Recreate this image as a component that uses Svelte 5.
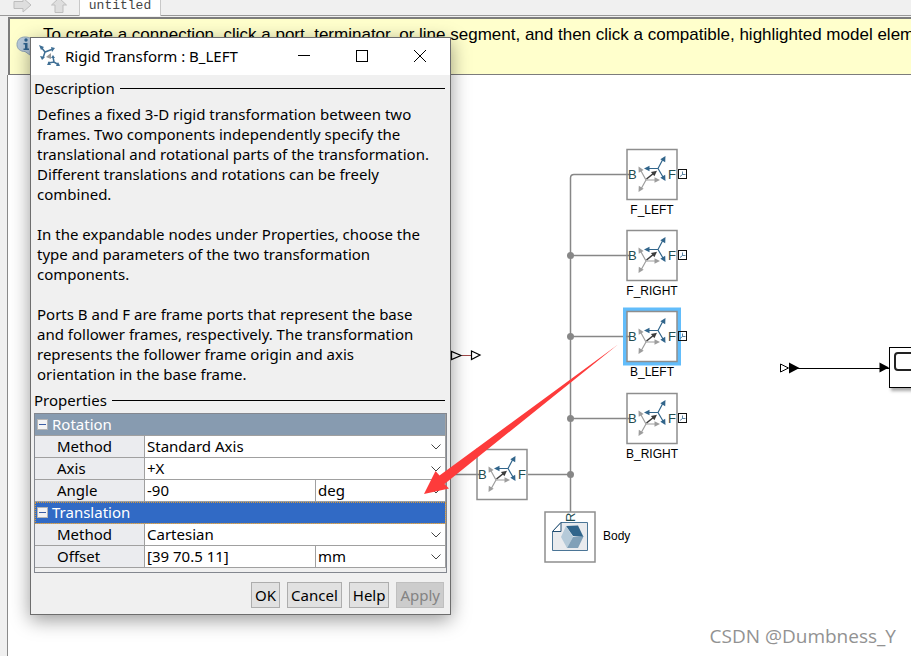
<script>
  const ORIGIN_X = 8;
  const ORIGIN_Y = 75;

  const blocks = [
    { name: 'F_LEFT', x: 626, y: 148, port: true },
    { name: 'F_RIGHT', x: 626, y: 229, port: true },
    { name: 'B_LEFT', x: 626, y: 310, port: true, selected: true },
    { name: 'B_RIGHT', x: 626, y: 392, port: true },
    { name: '', x: 476, y: 448 }
  ];
  const junctions = [255, 336, 418, 474];

  let groups = $state([
    {
      title: 'Rotation',
      open: true,
      active: false,
      rows: [
        { id: 'rot-method', label: 'Method', options: ['Standard Axis', 'Aligned Axes', 'Arbitrary Axis'] },
        { id: 'rot-axis', label: 'Axis', options: ['+X', '+Y', '+Z'] },
        { id: 'rot-angle', label: 'Angle', value: '-90', options: ['deg', 'rad'] }
      ]
    },
    {
      title: 'Translation',
      open: true,
      active: true,
      rows: [
        { id: 'tr-method', label: 'Method', options: ['Cartesian', 'Cylindrical', 'Standard Axis'] },
        { id: 'tr-offset', label: 'Offset', value: '[39 70.5 11]', options: ['mm', 'cm', 'm'] }
      ]
    }
  ]);
</script>

{#snippet head(x, y, angle, fill)}
  <path d="M0 0L-5.500 -2.800V2.800Z" {fill} transform="translate({x} {y}) rotate({angle})" />
{/snippet}

{#snippet frames()}
  <g fill="none" stroke-width="1.200">
    <path stroke="#9d9d9d" d="M20 32L14.500 22M20 32H30M20 32L15 41" />
    <path stroke="#31658b" d="M32 20.500H22M32 20.500L36.500 12M32 20.500L37 29" />
    <path stroke="#3c3c3c" stroke-width="1.600" d="M20.500 31L28 25" />
  </g>
  {@render head(12.5, 18.5, 241, '#9d9d9d')}
  {@render head(34, 32, 0, '#9d9d9d')}
  {@render head(12.5, 44, 120, '#9d9d9d')}
  {@render head(18, 20.5, 180, '#31658b')}
  {@render head(39.5, 8, -60, '#31658b')}
  {@render head(39.5, 33, 60, '#31658b')}
  {@render head(31, 22.7, -38, '#3c3c3c')}
{/snippet}

<div class="app">
  <header class="toolbar">
    <button class="tool" aria-label="Forward">
      <svg width="20" height="16" viewBox="0 0 20 16"><path d="M1 1.500H10V-2L18 5L10 12V8.500H1Z" fill="#dedede" stroke="#bdbdbd" /></svg>
    </button>
    <button class="tool up" aria-label="Up to parent">
      <svg width="18" height="16" viewBox="0 0 18 16"><path d="M5 12.500V5H1.500L9 -2L16.500 5H13V12.500Z" fill="#dedede" stroke="#bdbdbd" /></svg>
    </button>
    <a class="tab" href="#untitled">untitled</a>
  </header>

  <div class="workspace">
    <div class="banner">
      <svg class="info" width="22" height="24" viewBox="0 0 22 24">
        <path d="M9 2C4 2 1 5 1 9.500C1 14 4.500 16.500 9 16.500L14 20V15.500C17 14 18.500 12 18.500 9.500C18.500 5 14.500 2 9 2Z" fill="#b9cbdc" stroke="#90a5b8" />
        <circle cx="10" cy="5" r="1.700" fill="#2f6491" />
        <path d="M7.500 8H11.500V13.500H13V15H7.500V13.500H9V9.500H7.500Z" fill="#2f6491" />
      </svg>
      <span>To create a connection, click a port, terminator, or line segment, and then click a compatible, highlighted model element.</span>
    </div>

    <main class="canvas">
      <svg class="wires">
        <g transform="translate({-ORIGIN_X} {-ORIGIN_Y})">
          <g fill="none" stroke="#878787" stroke-width="1.500">
            <path d="M626 174.500H574Q570.500 174.500 570.500 178V512" />
            <path d="M570.500 255.500H626M570.500 336.500H626M570.500 418.500H626M450 474.500H476M528 474.500H570.500" />
          </g>
          {#each junctions as y}
            <circle cx="570.500" cy={y + 0.5} r="3.500" fill="#878787" />
          {/each}
          <path d="M462 355.500H471" stroke="#a04848" />
          <path d="M451.500 351.500V359.500L461 355.500ZM471.500 351L480 355L471.500 359.500Z" fill="#fff" stroke="#000" stroke-width="1.200" />
          <path d="M789 368.500H889" stroke="#000" />
          <path d="M780.500 364V372L788.500 368Z" fill="#fff" stroke="#000" />
          <path d="M789 362.500V373.500L799.500 368ZM879.500 362.500V372.500L889 367.500Z" />
        </g>
      </svg>

      {#each blocks as b}
        <div class="block" style:left="{b.x - ORIGIN_X}px" style:top="{b.y - ORIGIN_Y}px">
          <svg width="62" height="52" viewBox="0 0 62 52">
            {#if b.selected}
              <rect x="-1" y="-0.500" width="54" height="54" fill="none" stroke="#62bdfb" stroke-width="4" />
            {/if}
            <rect x="1" y="1.500" width="50" height="50" fill="#fff" stroke="#8e8e8e" stroke-width="1.500" />
            <path d="M0 26.500H3" stroke="#878787" stroke-width="1.500" />
            {@render frames()}
            <text x="2" y="31">B</text>
            <text x="42" y="31">F</text>
            {#if b.port}
              <rect x="52.500" y="21.500" width="8" height="9" fill={b.selected ? 'none' : '#fff'} stroke="#111" />
              <path d="M56.500 23.500V26.500H59.500M56.500 26.500L54 28.500" fill="none" stroke="#31658b" stroke-width=".8" />
            {/if}
          </svg>
          {#if b.name}<span>{b.name}</span>{/if}
        </div>
      {/each}

      <div class="block body" style:left="{544 - ORIGIN_X}px" style:top="{511 - ORIGIN_Y}px">
        <svg width="52" height="52" viewBox="0 0 52 52">
          <rect x="1" y="1" width="50" height="50" fill="#fff" stroke="#8e8e8e" stroke-width="1.500" />
          <path d="M17 11.500H43.500V39.500H8.500V20.500Z" fill="#e9ebee" stroke="#4b7596" />
          <path d="M8.500 20.500L17 11.500V20.500Z" fill="#fff" stroke="#244f72" />
          <path d="M22 15L34 14.500L39.500 26L29 25Z" fill="#31658b" />
          <path d="M22 15L29 26L23 37L17 26Z" fill="#b5cad9" />
          <path d="M29 26L39.500 25.500L34 37H23Z" fill="#80a0b8" />
          <text transform="translate(31 11) rotate(-90)">R</text>
        </svg>
        <span>Body</span>
      </div>

      <div class="scope" style:left="{889 - ORIGIN_X}px" style:top="{347 - ORIGIN_Y}px"><i></i></div>
    </main>
  </div>

  <form class="dialog" onsubmit={(e) => e.preventDefault()}>
    <div class="titlebar">
      <svg class="logo" width="22" height="22" viewBox="0 0 22 22" fill="none" stroke="#3f6f95" stroke-width="1.500">
        <path d="M2 2L6 7L14 4M6 7L4 13M9 18L15 17L20 20M15 17L14 12" />
        <path d="M0 0L5 2L2 5ZM16 3L12 2L13 7ZM3 15L1 11L6 12ZM21 21L17 21L19 17ZM8 20L10 16L12 20ZM14 10L12 13H16Z" fill="#3f6f95" stroke="none" />
        <path d="M7 12L12 8V14Z" fill="#999" stroke="none" />
      </svg>
      <h1>Rigid Transform : B_LEFT</h1>
      <button type="button" aria-label="Minimize"><svg width="14" height="14"><path d="M1 6.500H13" /></svg></button>
      <button type="button" aria-label="Maximize"><svg width="14" height="14"><rect x="1.500" y="1.500" width="11" height="11" /></svg></button>
      <button type="button" aria-label="Close"><svg width="14" height="14"><path d="M1 1L13 13M13 1L1 13" /></svg></button>
    </div>

    <h2>Description</h2>
    <div class="description">
      <p>Defines a fixed 3-D rigid transformation between two<br />frames. Two components independently specify the<br />translational and rotational parts of the transformation.<br />Different translations and rotations can be freely<br />combined.</p>
      <p>In the expandable nodes under Properties, choose the<br />type and parameters of the two transformation<br />components.</p>
      <p>Ports B and F are frame ports that represent the base<br />and follower frames, respectively. The transformation<br />represents the follower frame origin and axis<br />orientation in the base frame.</p>
    </div>

    <h2>Properties</h2>
    <div class="grid">
      {#each groups as g}
        <button type="button" class="group" class:active={g.active} aria-expanded={g.open} onclick={() => (g.open = !g.open)}>
          <svg width="11" height="11" viewBox="0 0 11 11"><rect x=".5" y=".5" width="10" height="10" fill="#f3f3f3" stroke="#b5b5b5" /><path d="M2 5.500H9" stroke="#3c5fa5" /></svg>
          <span>{g.title}</span>
        </button>
        {#if g.open}
          {#each g.rows as r}
            <div class="row">
              <label for={r.id}>{r.label}</label>
              {#if r.value !== undefined}
                <input id={r.id} bind:value={r.value} />
              {/if}
              <div class="pick" class:unit={r.value !== undefined}>
                <select id={r.value === undefined ? r.id : r.id + '-unit'} aria-label={r.value === undefined ? r.label : r.label + ' unit'}>
                  {#each r.options as o}<option>{o}</option>{/each}
                </select>
                <svg width="10" height="6" viewBox="0 0 10 6"><path d="M.5 .5L5 5L9.500 .5" fill="none" stroke="#444" /></svg>
              </div>
            </div>
          {/each}
        {/if}
      {/each}
    </div>

    <div class="actions">
      <button>OK</button>
      <button type="button">Cancel</button>
      <button type="button">Help</button>
      <button type="button" disabled>Apply</button>
    </div>
  </form>

  <svg class="pointer" width="911" height="656" viewBox="0 0 911 656">
    <path d="M618 344.500L439.500 475.500L435.500 471L424 494L449 488.500L444.500 484Z" fill="#fd3b3b" />
  </svg>
  <div class="watermark">CSDN @Dumbness_Y</div>
</div>

<style>
  :global(body) { margin: 0; background: #f0f0f0; }
  * { box-sizing: border-box; }
  .app {
    position: relative;
    display: flex;
    flex-direction: column;
    min-height: 100vh;
    overflow: hidden;
    color: #000;
    font-family: "Liberation Sans", Arial, sans-serif;
  }
  .toolbar {
    display: flex;
    height: 16px;
    padding-left: 13px;
    background: #f0f0f0;
    border-bottom: 1px solid #999;
  }
  .tool { display: flex; width: 20px; padding: 0; border: 0; background: none; }
  .tool.up { margin: 0 9px 0 17px; }
  .tab {
    width: 82px;
    height: 16px;
    border: solid #c8c8c8;
    border-width: 0 1px;
    background: #fff;
    color: #444;
    font: 13px/12px "Liberation Mono", monospace;
    text-align: center;
    text-decoration: none;
  }
  .workspace { flex: 1; display: flex; flex-direction: column; padding: 1px 0 0 7px; }
  .banner {
    display: flex;
    height: 58px;
    margin-left: 1px;
    padding: 6px 0 0 6px;
    overflow: hidden;
    border: solid #7c7c7c;
    border-width: 2px 0 1px 2px;
    background: #ffffcc;
    font-size: 17px;
    line-height: 20px;
    white-space: nowrap;
  }
  .info { flex: none; margin: 10px 5px 0 0; }
  .canvas { position: relative; flex: 1; overflow: hidden; border-left: 1px solid #8a8a8a; background: #fff; }
  .wires { position: absolute; inset: 0; width: 100%; height: 100%; }
  .block { position: absolute; display: flex; flex-direction: column; width: 52px; align-items: center; font-size: 12px; line-height: 18px; }
  .block svg { flex: none; align-self: flex-start; overflow: visible; }
  .block text { font-size: 13px; fill: #234c50; }
  .block span { padding-top: 1px; }
  .block.body { flex-direction: row; }
  .block.body span { padding: 0 0 3px 7px; }
  .scope { position: absolute; width: 60px; height: 41px; padding: 4px; border: 1px solid #000; background: #fff; box-shadow: 2px 3px 3px #aaa; }
  .scope i { display: block; height: 19px; border: 2px solid #222; border-radius: 4px; }

  .dialog {
    position: absolute;
    left: 30px;
    top: 37px;
    width: 421px;
    border: 1px solid #6d6d6d;
    background: #f0f0f0;
    box-shadow: 0 5px 18px rgba(0, 0, 0, 0.4);
    font: 15px/20px "Noto Sans", "Open Sans", sans-serif;
  }
  .titlebar { display: flex; align-items: center; height: 37px; padding: 0 1px 2px 8px; background: #fff; }
  .logo { flex: none; margin-right: 4px; }
  h1 { flex: 1; margin: 0; font-size: 15px; font-weight: 400; white-space: nowrap; }
  .titlebar button { display: flex; justify-content: center; width: 58px; padding: 0; border: 0; background: none; }
  .titlebar button svg { fill: none; stroke: #000; }
  h2 { display: flex; align-items: center; gap: 5px; height: 20px; margin: 3px 5px 0 3px; font-size: 15px; font-weight: 400; line-height: 20px; }
  h2::after { content: ""; flex: 1; height: 1px; background: #000; }
  .description { padding: 6px 6px 3px; white-space: nowrap; }
  p { margin: 0 0 20px; }
  p:last-child { margin: 0; }
  .grid { margin: 3px 3px 0; padding-bottom: 4px; border: 1px solid #83878f; }
  .group, .row { height: 22px; border: 0 solid #a0a0a0; border-width: 0 1px 1px 0; }
  .group { display: flex; align-items: center; gap: 4px; width: 100%; padding: 0 2px; background: #879bb0; color: #fff; font: inherit; line-height: 20px; }
  .group span { padding-bottom: 2px; }
  .group.active { background: #316ac5; outline: 1px dotted #d79a3c; outline-offset: -1px; }
  .row { display: flex; background: #fff; }
  .row label { width: 110px; padding-left: 22px; border-right: 1px solid #a0a0a0; background: #ebecef; line-height: 21px; }
  .row input, .row select { padding: 0 2px; border: 0; background: #fff; color: #000; font: inherit; line-height: 21px; }
  .row input { flex: 1; min-width: 0; border-right: 1px solid #a0a0a0; }
  .pick { position: relative; flex: 1; display: flex; }
  .pick.unit { flex: 0 0 129px; }
  .pick select { width: 100%; appearance: none; border-radius: 0; }
  .pick svg { position: absolute; right: 4px; top: 8px; pointer-events: none; }
  .actions { display: flex; justify-content: flex-end; gap: 7px; padding: 9px 6px 6px 0; }
  .actions button { height: 26px; padding: 0 3px; border: 1px solid #adadad; background: #e1e1e1; color: #000; font: inherit; line-height: 20px; }
  .actions button:disabled { border-color: #bfbfbf; background: #ccc; color: #838383; }
  .pointer { position: absolute; left: 0; top: 0; pointer-events: none; }
  .watermark { position: absolute; right: 15px; bottom: 8px; color: #929292; font: 19px/24px "Open Sans", sans-serif; }
</style>
